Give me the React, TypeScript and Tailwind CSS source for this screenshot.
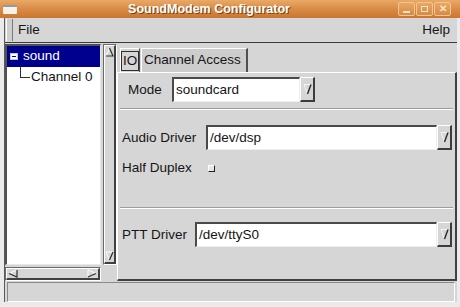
import React from "react";

function ComboArrow() {
  return (
    <svg width="9" height="12" viewBox="0 0 9 12">
      <path d="M1 1.5 L8 1.5" stroke="#f4f4f4" strokeWidth="1" />
      <path d="M1 1.5 L4.5 11" stroke="#f4f4f4" strokeWidth="1" />
      <path d="M8 1.5 L4.5 11" stroke="#2a2a2a" strokeWidth="1.4" />
    </svg>
  );
}

function Combo({ value, width }: { value: string; width: string }) {
  return (
    <div className="flex h-[25px]">
      <div
        className={`${width} h-full bg-white border-t-2 border-l-2 border-t-[#4a4a4a] border-l-[#4a4a4a] border-b border-r border-b-[#eeeeee] border-r-[#eeeeee] flex items-center pl-[2px]`}
      >
        {value}
      </div>
      <div className="w-[15px] h-full bg-[#d6d6d6] border-t border-l border-t-white border-l-white border-b-2 border-r-2 border-b-[#3c3c3c] border-r-[#3c3c3c] flex items-center justify-center">
        <ComboArrow />
      </div>
    </div>
  );
}

function Separator() {
  return (
    <div className="mx-[2px] h-[2px] border-t border-t-[#9c9c9c] border-b border-b-white" />
  );
}

function ScrollArrow({ dir }: { dir: "up" | "down" | "left" | "right" }) {
  const paths = {
    up: { light: "M1 9 L4.5 1", dark: "M4.5 1 L8 9 L1 9" },
    down: { light: "M1 1 L8 1 M1 1 L4.5 9", dark: "M8 1 L4.5 9" },
    left: { light: "M9 1 L1 4.5", dark: "M1 4.5 L9 8 L9 1" },
    right: { light: "M1 1 L1 8 M1 1 L9 4.5", dark: "M9 4.5 L1 8" },
  }[dir];
  return (
    <svg width="10" height="10" viewBox="0 0 10 10">
      <path d={paths.light} stroke="#ffffff" strokeWidth="1" fill="none" />
      <path d={paths.dark} stroke="#303030" strokeWidth="1.2" fill="none" />
    </svg>
  );
}

function TitleButton({ children }: { children: React.ReactNode }) {
  return (
    <div className="w-[17px] h-[14px] rounded-[2px] border border-[#f3c590] bg-gradient-to-b from-[#e8a865] to-[#d68a45] flex items-center justify-center text-[#fbe3c6] text-[10px] font-bold leading-none">
      {children}
    </div>
  );
}

export default function App() {
  return (
    <div className="w-[460px] h-[307px] overflow-hidden bg-[#ebebeb] font-['Liberation_Sans',Arial,sans-serif] text-[13.5px] text-[#151515] flex flex-col">
      {/* title bar */}
      <div className="h-[18px] shrink-0 bg-gradient-to-b from-[#eaa966] via-[#d98b46] to-[#c97630] flex items-center relative">
        <div className="ml-[3px] w-[14px] h-[9px] bg-[#f6f1ea] border-t-2 border-t-[#9a9a9a] rounded-[1px]" />
        <div className="absolute left-0 right-[42px] top-0 h-[18px] flex items-center justify-center text-white font-bold text-[12.5px] [text-shadow:1px_1px_0_#7a4414]">
          SoundModem Configurator
        </div>
        <div className="ml-auto mr-[9px] flex gap-[1px]">
          <TitleButton>
            <span className="block w-[7px] h-[2px] bg-[#fbe3c6] mt-[6px]" />
          </TitleButton>
          <TitleButton>
            <span className="block w-[7px] h-[6px] border border-[#fbe3c6]" />
          </TitleButton>
          <TitleButton>✕</TitleButton>
        </div>
      </div>

      <div className="flex-1 flex flex-col ml-[4px] mr-[3px] mb-[5px] bg-[#d6d6d6] border-l border-l-[#5a5a5a]">
        {/* menu bar */}
        <div className="h-[25px] shrink-0 flex items-center border-b border-b-[#3a3a3a]">
          <div className="w-[7px] h-[22px] ml-[1px] border-l border-l-white border-r border-r-[#7a7a7a] bg-[#cfcfcf]" />
          <span className="ml-[5px]">File</span>
          <span className="ml-auto mr-[7px]">Help</span>
        </div>

        <div className="flex flex-1">
          {/* tree column */}
          <div className="w-[112px] shrink-0 flex flex-col pt-[1px]">
            <div className="flex h-[221px]">
              <div className="w-[96px] h-full bg-white border-t-2 border-l-2 border-t-[#505050] border-l-[#505050] border-b border-r border-b-[#e8e8e8] border-r-[#e8e8e8]">
                <div className="h-[21px] bg-[#00008f] flex items-center text-white">
                  <div className="ml-[3px] w-[8px] h-[7px] bg-white border border-[#c0c0e8] flex items-center justify-center">
                    <span className="block w-[4px] h-[1px] bg-[#00008f]" />
                  </div>
                  <span className="ml-[5px]">sound</span>
                </div>
                <div className="flex h-[20px]">
                  <div className="ml-[13px] w-[10px] h-[11px] border-l border-b border-[#303030]" />
                  <span className="ml-px leading-[20px]">Channel 0</span>
                </div>
              </div>
              <div className="ml-[2px] w-[14px] h-full bg-[#c4c4c4] border border-t-[#6a6a6a] border-l-[#6a6a6a] border-b-white border-r-white">
                <div className="h-full bg-[#d6d6d6] border-t border-l border-t-white border-l-white border-b-2 border-r-2 border-b-[#404040] border-r-[#404040] flex flex-col items-center justify-between py-[1px]">
                  <ScrollArrow dir="up" />
                  <ScrollArrow dir="down" />
                </div>
              </div>
            </div>
            <div className="mt-[2px] w-[96px] h-[14px] bg-[#c4c4c4] border border-t-[#6a6a6a] border-l-[#6a6a6a] border-b-white border-r-white">
              <div className="h-full bg-[#d6d6d6] border-t border-l border-t-white border-l-white border-b-2 border-r-2 border-b-[#404040] border-r-[#404040] flex items-center justify-between px-[1px]">
                <ScrollArrow dir="left" />
                <ScrollArrow dir="right" />
              </div>
            </div>
          </div>

          {/* notebook */}
          <div className="flex-1 flex flex-col pt-[5px]">
            <div className="flex h-[24px] pl-[3px] items-end">
              <div className="h-[24px] w-[20px] border-t border-l border-t-white border-l-white border-r border-r-[#505050] flex items-center justify-center">
                <span className="border border-[#303030] px-px leading-[18px]">IO</span>
              </div>
              <div className="h-[24px] w-[107px] ml-px bg-[#cdcdcd] border-t border-l border-t-white border-l-white border-r-2 border-r-[#505050] flex items-center pl-[2px] whitespace-nowrap">
                Channel Access
              </div>
            </div>
            <div className="flex-1 border-t border-l border-t-white border-l-white border-r-2 border-b-2 border-r-[#404040] border-b-[#404040] flex flex-col">
              {/* Mode */}
              <div className="h-[35px] pt-[4px] pl-[10px] flex">
                <span className="w-[44px] leading-[25px]">Mode</span>
                <Combo value="soundcard" width="w-[128px]" />
              </div>
              <Separator />
              {/* Audio */}
              <div className="h-[97px] pt-[15px] pl-[4px] flex flex-col">
                <div className="flex">
                  <span className="w-[84px] leading-[25px]">Audio Driver</span>
                  <Combo value="/dev/dsp" width="w-[231px]" />
                </div>
                <div className="flex items-center mt-[10px] h-[16px]">
                  <span className="w-[86px]">Half Duplex</span>
                  <div className="w-[7px] h-[7px] bg-[#e6e6e6] border border-t-white border-l-white border-b-[#202020] border-r-[#202020]" />
                </div>
              </div>
              <Separator />
              {/* PTT */}
              <div className="pt-[13px] pl-[4px] flex">
                <span className="w-[73px] leading-[25px]">PTT Driver</span>
                <Combo value="/dev/ttyS0" width="w-[242px]" />
              </div>
            </div>
          </div>
        </div>

        {/* status bar */}
        <div className="h-[20px] shrink-0 mx-[2px] mt-[1px] border-t border-l border-t-[#8a8a8a] border-l-[#8a8a8a] border-b border-r border-b-white border-r-white" />
      </div>
    </div>
  );
}
